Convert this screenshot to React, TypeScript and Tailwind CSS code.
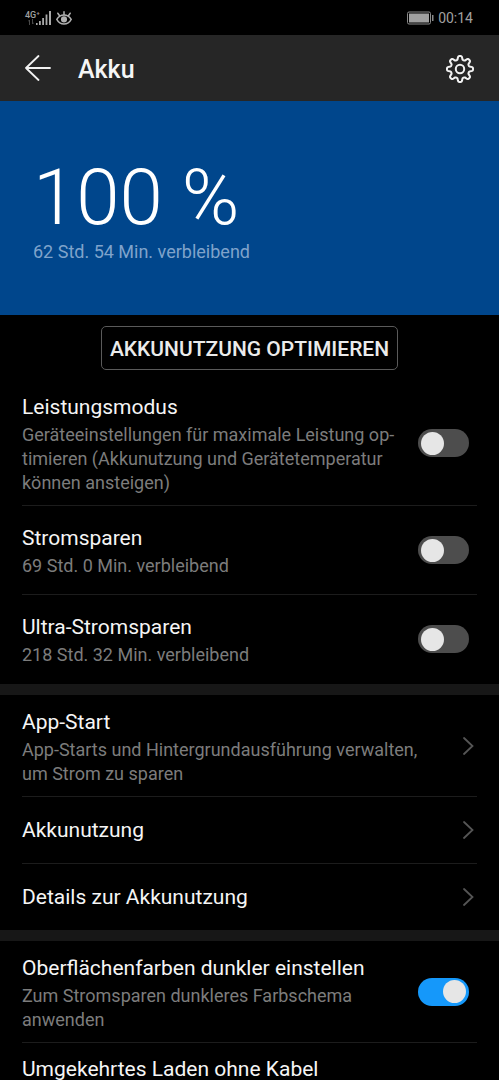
import { useState } from "react";
import type { ReactNode } from "react";

const rowBase = "flex w-full items-center border-b border-[#1c1c1c] text-left";

function gearOutline() {
  const points: string[] = [];
  for (let i = 0; i < 240; i++) {
    const a = (i / 240) * Math.PI * 2;
    const r = 11.2 + 1.9 * Math.tanh(1.9 * Math.cos(8 * a));
    points.push(`${(15 + r * Math.sin(a)).toFixed(2)} ${(15 - r * Math.cos(a)).toFixed(2)}`);
  }
  return `M${points.join("L")}Z`;
}

function GearIcon() {
  return (
    <svg width="30" height="30" viewBox="0 0 30 30" fill="none" stroke="#f2f2f2" strokeWidth="2" strokeLinejoin="round">
      <path d={gearOutline()} />
      <circle cx="15" cy="15" r="4.2" />
    </svg>
  );
}

function BackIcon() {
  return (
    <svg width="26" height="26" viewBox="0 0 26 26" fill="none" stroke="#f2f2f2" strokeWidth="1.8" strokeLinecap="round" strokeLinejoin="round">
      <path d="M25 13H1M13.5 1L1 13l12.5 12" />
    </svg>
  );
}

function DataArrows() {
  return (
    <svg width="6" height="6" viewBox="0 0 6 6" fill="none" stroke="#4a4a4a" className="self-center">
      <path d="M1.5 6V1L0 2.500M4.500 0v5L6 3.500" />
    </svg>
  );
}

function SignalIcon() {
  return (
    <svg width="15" height="14" viewBox="0 0 15 14" fill="#a8a8a8">
      <rect x="0" y="12" width="1.6" height="2" />
      <rect x="3" y="10" width="1.8" height="4" />
      <rect x="6.2" y="7" width="1.8" height="7" />
      <rect x="9.6" y="3.5" width="1.8" height="10.5" />
      <rect x="13" y="0" width="2" height="14" />
    </svg>
  );
}

function EyeIcon() {
  return (
    <svg width="16" height="14" viewBox="0 0 16 14" fill="none" stroke="#b0b0b0" strokeWidth="1.5" strokeLinecap="round">
      <path d="M.8 8.4C2.5 5.4 5 3.9 8 3.9s5.5 1.5 7.2 4.5C13.5 11.6 11 13.100 8 13.100S2.500 11.600.8 8.400Z" />
      <circle cx="8" cy="8.400" r="2.300" fill="#b0b0b0" />
      <path d="M8 3.500V.8M3.600 4.800L1.800 2.200M12.400 4.800l1.800-2.600" />
    </svg>
  );
}

function BatteryIcon() {
  return (
    <svg width="27" height="14" viewBox="0 0 27 14">
      <rect x="0.5" y="1" width="23" height="12" rx="1.5" fill="none" stroke="#8a8a8a" />
      <rect x="2" y="2.5" width="20" height="9" fill="#a0a0a0" />
      <rect x="25" y="4" width="1.5" height="6" fill="#8a8a8a" />
    </svg>
  );
}

function Chevron() {
  return (
    <svg width="12" height="18" viewBox="0 0 12 18" fill="none" stroke="#555" strokeWidth="1.8" strokeLinecap="round" className="shrink-0">
      <path d="M2 1l8.500 8L2 17" />
    </svg>
  );
}

interface TextProps {
  title: string;
  description?: string;
}

function RowText({ title, description }: TextProps) {
  return (
    <span className="block min-w-0 flex-1">
      <span className="block text-[21px] leading-8 text-[#f5f5f5]">{title}</span>
      {description && <span className="block text-[18px] leading-6 text-[#7c7c7c]">{description}</span>}
    </span>
  );
}

interface SwitchRowProps extends TextProps {
  size?: string;
  initial?: boolean;
}

function SwitchRow({ title, description, size = "min-h-[89px]", initial = false }: SwitchRowProps) {
  const [on, setOn] = useState(initial);

  return (
    <label className={`${rowBase} ${size} relative cursor-pointer gap-4 pr-2`}>
      <RowText title={title} description={description} />
      <input
        type="checkbox"
        role="switch"
        checked={on}
        onChange={(e) => setOn(e.target.checked)}
        className="peer sr-only"
      />
      <span className="flex h-7 w-[51px] shrink-0 rounded-full bg-[#4d4d4d] p-[3px] peer-checked:justify-end peer-checked:bg-[#1598fa]">
        <span className="size-[23px] self-center rounded-full bg-[#e6e6e6]" />
      </span>
    </label>
  );
}

function LinkRow({ title, description, size = "min-h-[67px]" }: TextProps & { size?: string }) {
  return (
    <a href="#" className={`${rowBase} ${size} gap-4 pr-[3px]`}>
      <RowText title={title} description={description} />
      <Chevron />
    </a>
  );
}

function Group({ children }: { children: ReactNode }) {
  return <section className="px-[22px] *:last:border-transparent">{children}</section>;
}

export default function App() {
  return (
    <div lang="de" className="flex h-screen flex-col bg-black font-['Roboto',sans-serif] text-[#f5f5f5]">
      <div className="flex h-[35px] shrink-0 items-center justify-between pr-[26px] pl-[25px] text-[#a0a0a0]">
        <div className="flex items-center gap-[5px]">
          <div className="flex items-end">
            <span className="flex w-[11px] flex-col text-[9px] leading-2 font-medium whitespace-nowrap">
              4G⁺
              <DataArrows />
            </span>
            <SignalIcon />
          </div>
          <EyeIcon />
        </div>
        <div className="flex items-center gap-1">
          <BatteryIcon />
          <span className="text-[14px] leading-4">00:14</span>
        </div>
      </div>

      <header className="flex h-[66px] shrink-0 items-center bg-[#262626] pr-6 pl-[25px]">
        <button type="button" aria-label="Zurück">
          <BackIcon />
        </button>
        <h1 className="ml-[27px] flex-1 pt-[3px] text-[25px] leading-8 font-medium">Akku</h1>
        <button type="button" aria-label="Einstellungen" className="pt-[2px]">
          <GearIcon />
        </button>
      </header>

      <main className="min-h-0 flex-1 overflow-y-auto [scrollbar-width:none]">
        <div className="bg-[#00468c] px-[33px] pt-[55px] pb-[51px]">
          <div className="text-[78px] leading-[84px] font-light text-white">100 %</div>
          <div className="text-[18px] leading-6 text-[#7fa3cb]">62 Std. 54 Min. verbleibend</div>
        </div>

        <div className="flex justify-center pt-[11px] pb-[11px]">
          <button type="button" className="h-11 rounded-[5px] border border-[#5a5a5a] px-2 pt-[3px] text-[21px] font-medium text-[#ebebeb]">
            AKKUNUTZUNG OPTIMIEREN
          </button>
        </div>

        <Group>
          <SwitchRow
            title="Leistungsmodus"
            description={"Geräteeinstellungen für maximale Leistung op\u00adtimieren (Akkunutzung und Gerätetemperatur können ansteigen)"}
            size="min-h-[125px]"
          />
          <SwitchRow title="Stromsparen" description="69 Std. 0 Min. verbleibend" />
          <SwitchRow title="Ultra-Stromsparen" description="218 Std. 32 Min. verbleibend" />
        </Group>
        <div className="h-[11px] bg-[#171717]" />
        <Group>
          <LinkRow
            title="App-Start"
            description="App-Starts und Hintergrundausführung verwalten, um Strom zu sparen"
            size="min-h-[102px]"
          />
          <LinkRow title="Akkunutzung" />
          <LinkRow title="Details zur Akkunutzung" size="min-h-[66px]" />
        </Group>
        <div className="h-[11px] bg-[#171717]" />
        <Group>
          <SwitchRow
            title="Oberflächenfarben dunkler einstellen"
            description="Zum Stromsparen dunkleres Farbschema anwenden"
            size="min-h-[102px]"
            initial
          />
          <SwitchRow title="Umgekehrtes Laden ohne Kabel" size="min-h-[102px] *:first:self-start *:first:pt-[10px]" />
        </Group>
      </main>
    </div>
  );
}
